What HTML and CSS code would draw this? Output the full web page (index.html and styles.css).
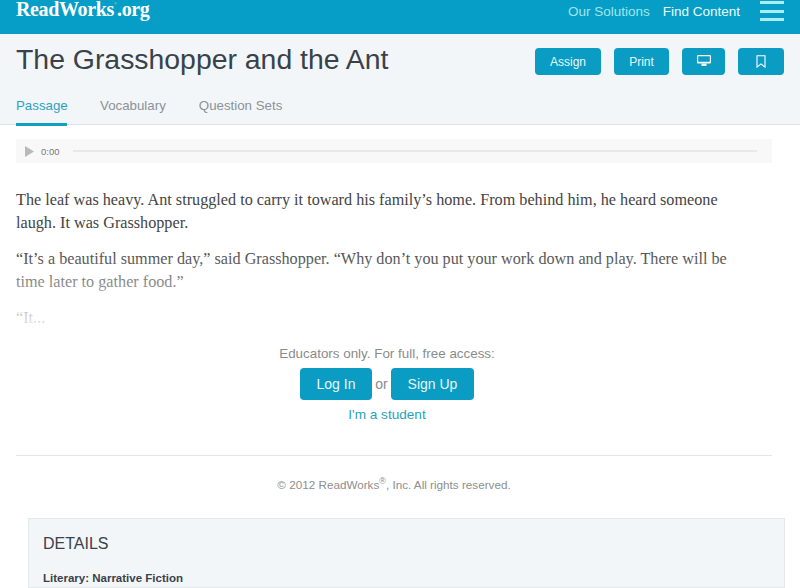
FILE: index.html
```html
<!DOCTYPE html>
<html lang="en">

<head>
    <meta charset="UTF-8">
    <meta name="viewport" content="width=device-width, initial-scale=1.0">
    <title>The Grasshopper and the Ant</title>
    <link rel="stylesheet" href="styles.css">
</head>

<body>

    <header class="topbar">
        <a class="logo">ReadWorks<span class="logoReg">®</span>.org</a>
        <nav class="topnav">
            <a class="navLink">Our Solutions</a>
            <a class="navLink navActive">Find Content</a>
            <div class="burger"><span></span><span></span><span></span></div>
        </nav>
    </header>

    <section class="subhead">
        <div class="titleRow">
            <h1>The Grasshopper and the Ant</h1>
            <div class="actions">
                <button class="actionBtn assign">Assign</button>
                <button class="actionBtn print">Print</button>
                <button class="actionBtn screen">
                    <svg class="screenIcon" width="14" height="11" viewBox="0 0 14 11">
                        <path d="M1 0h12a1 1 0 0 1 1 1v6.6a1 1 0 0 1-1 1H1a1 1 0 0 1-1-1V1a1 1 0 0 1 1-1zM1.2 1.2v5.6h11.6V1.2z" fill="#fff" fill-rule="evenodd"/>
                        <path d="M4.5 8.6h5V11h-5z" fill="#fff"/>
                    </svg>
                </button>
                <button class="actionBtn mark">
                    <svg width="10" height="13" viewBox="0 0 10 13">
                        <path d="M1 0.7h8v11.4l-4-3.2-4 3.2z" fill="none" stroke="#fff" stroke-width="1.1"/>
                    </svg>
                </button>
            </div>
        </div>
        <div class="tabs">
            <a class="tab tabActive">Passage</a>
            <a class="tab">Vocabulary</a>
            <a class="tab">Question Sets</a>
        </div>
    </section>

    <main class="content">
        <div class="audio">
            <svg class="playIcon" width="9" height="11" viewBox="0 0 9 11"><path d="M0 0l9 5.5-9 5.5z" fill="#b9b9b9"/></svg>
            <span class="audioTime">0:00</span>
            <div class="audioLine"></div>
        </div>

        <div class="passage">
            <p>The leaf was heavy. Ant struggled to carry it toward his family’s home. From behind him, he heard someone laugh. It was Grasshopper.</p>
            <p>“It’s a beautiful summer day,” said Grasshopper. “Why don’t you put your work down and play. There will be time later to gather food.”</p>
            <p>“It...</p>
            <div class="fade"></div>
        </div>

        <div class="gate">
            <div class="gateText">Educators only. For full, free access:</div>
            <div class="gateBtns">
                <a class="gateBtn login">Log In</a>
                <span class="gateOr">or</span>
                <a class="gateBtn signup">Sign Up</a>
            </div>
            <a class="student">I'm a student</a>
        </div>

        <div class="copyright">© 2012 ReadWorks<sup>®</sup>, Inc. All rights reserved.</div>

        <div class="details">
            <h2>DETAILS</h2>
            <div class="genre">Literary: Narrative Fiction</div>
        </div>
    </main>

</body>

</html>
```

FILE: styles.css
```css
html,
body {
    height: 588px;
    overflow: hidden;
}

body {
    margin: 0;
    background-color: #fff;
    font-family: "Liberation Sans", Arial, sans-serif;
}

.topbar {
    display: flex;
    justify-content: space-between;
    height: 34px;
    padding: 0 16px;
    background-color: #069ec6;
    border-bottom: 1px solid #0b97bb;
}

.logo {
    margin-top: 0;
    color: #fff;
    font-family: "Liberation Serif", serif;
    font-size: 20px;
    font-weight: bold;
    letter-spacing: -0.35px;
    line-height: 19px;
}

.logoReg {
    font-size: 4px;
    font-weight: normal;
    letter-spacing: 0;
    line-height: 0;
    vertical-align: 11px;
    color: #9fe6ef;
}

.topnav {
    display: flex;
    align-items: flex-start;
}

.navLink {
    margin-top: 3px;
    margin-right: 13px;
    color: #9fe6ef;
    font-size: 13.5px;
    line-height: 17px;
}

.navActive {
    margin-right: 20px;
    color: #e6fbfc;
}

.burger {
    display: flex;
    flex-direction: column;
    gap: 5.5px;
    width: 24px;
    margin-top: 1px;
}

.burger span {
    height: 3px;
    background-color: #a8eef4;
}

.subhead {
    height: 90px;
    margin-top: -1px;
    background-color: #f3f6f8;
    border-bottom: 1px solid #dfe2e3;
    padding: 0 16px;
}

.titleRow {
    display: flex;
    justify-content: space-between;
    align-items: flex-start;
}

h1 {
    margin: 7px 0 0 0;
    color: #39424a;
    font-size: 28.4px;
    font-weight: normal;
    line-height: 36px;
}

.actions {
    display: flex;
    gap: 13px;
    margin-top: 14px;
}

.actionBtn {
    display: flex;
    align-items: center;
    justify-content: center;
    height: 27px;
    padding: 0;
    border: none;
    border-radius: 4px;
    background-color: #0a9cc2;
    color: #e8f7fa;
    font-family: inherit;
    font-size: 12px;
}

.assign {
    width: 66px;
}

.print {
    width: 55px;
}

.screen {
    width: 43px;
}

.screenIcon {
    margin-bottom: 2px;
}

.mark {
    width: 46px;
}

.tabs {
    display: flex;
    gap: 33px;
    margin-top: 18px;
}

.tab {
    height: 28px;
    color: #8b9299;
    font-size: 13.3px;
    line-height: 22px;
}

.tabActive {
    width: 51px;
    color: #2ba3c4;
    border-bottom: 3px solid #119fc2;
}

.content {
    padding: 14px 28px 0 16px;
}

.audio {
    display: flex;
    align-items: center;
    height: 24px;
    background-color: #f8f8f8;
    padding: 0 15px 0 9px;
}

.audioTime {
    margin-left: 7px;
    color: #777;
    font-size: 9.5px;
}

.audioLine {
    flex: 1;
    height: 2px;
    margin-left: 13px;
    background-color: #e8e8e8;
}

.passage {
    position: relative;
    max-width: 730px;
    margin-top: 26px;
    color: #444;
    font-family: "Liberation Serif", serif;
    font-size: 16.2px;
    line-height: 23px;
}

.passage p {
    margin: 0 0 13px 0;
}

.fade {
    position: absolute;
    left: 0;
    right: 0;
    top: 60px;
    bottom: -8px;
    background: linear-gradient(rgba(255, 255, 255, 0), #fff);
}

.gate {
    display: flex;
    flex-direction: column;
    align-items: center;
    height: 110px;
    margin-top: 15px;
    padding-right: 14px;
    border-bottom: 1px solid #e6e6e6;
}

.gateText {
    color: #8b8b8b;
    font-size: 13.4px;
    line-height: 18px;
}

.gateBtns {
    display: flex;
    align-items: center;
    margin-top: 5px;
}

.gateBtn {
    display: block;
    height: 32px;
    border-radius: 4px;
    background-color: #0a9cc2;
    color: #e8f7fa;
    font-size: 14px;
    line-height: 32px;
    text-align: center;
}

.login {
    width: 72px;
}

.signup {
    width: 83px;
}

.gateOr {
    width: 19px;
    color: #8b8b8b;
    font-size: 14px;
    text-align: center;
}

.student {
    margin-top: 6px;
    color: #2a9fbc;
    font-size: 13.6px;
    line-height: 17px;
}

.copyright {
    margin-top: 21px;
    color: #8e8e8e;
    font-size: 11.7px;
    line-height: 16px;
    text-align: center;
}

.copyright sup {
    font-size: 9px;
    line-height: 0;
}

.details {
    height: 68px;
    margin: 25px -13px 0 12px;
    padding: 0 14px;
    background-color: #f3f6f8;
    border: 1px solid #e6e9eb;
}

.details h2 {
    margin: 15px 0 0 0;
    color: #39424a;
    font-size: 16px;
    font-weight: normal;
    line-height: 20px;
}

.genre {
    margin-top: 17px;
    color: #39424a;
    font-size: 11.5px;
    font-weight: bold;
    line-height: 15px;
}
```
